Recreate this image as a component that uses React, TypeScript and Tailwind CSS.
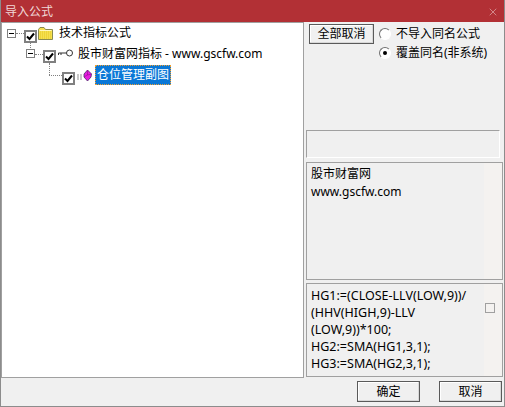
import { X } from "lucide-react";

const font = { fontFamily: '"Noto Sans", "Noto Sans CJK SC", sans-serif' };

function TreeCheck() {
  return (
    <span className="mt-[6px] flex h-[13px] w-[13px] shrink-0 items-center justify-center border-2 border-[#808080] bg-white">
      <svg width="9" height="9" viewBox="0 0 9 9">
        <path d="M1 4.5 L3.5 7 L8 1.5" fill="none" stroke="#000" strokeWidth="2" />
      </svg>
    </span>
  );
}

function Expander() {
  return (
    <span className="flex h-[9px] w-[9px] shrink-0 items-center justify-center border border-[#808080] bg-white">
      <span className="h-px w-[5px] bg-black" />
    </span>
  );
}

function Folder() {
  return (
    <svg width="15" height="13" viewBox="0 0 15 13" className="shrink-0">
      <path d="M0.5 12.5 V2.5 L2 0.5 H6 L7.5 2.5 H14.5 V12.5 Z" fill="#f5e050" stroke="#8a8a50" />
      <path d="M1.5 3.5 H13.5" stroke="#fff8c0" />
      <path d="M2 5 H13 M2 7 H13 M2 9 H13 M2 11 H13" stroke="#e6c820" strokeDasharray="1 1" />
    </svg>
  );
}

function KeyIcon() {
  return (
    <svg width="15" height="9" viewBox="0 0 15 9" className="shrink-0">
      <circle cx="11.5" cy="4" r="3" fill="#fff" stroke="#333" />
      <path d="M8.5 4 H0.5 V6 M3 4 V6" fill="none" stroke="#333" />
    </svg>
  );
}

function GemIcon() {
  return (
    <svg width="15" height="13" viewBox="0 0 15 13" className="shrink-0">
      <path d="M0 6 H6 M0 8 H6 M0 10 H6" stroke="#909090" strokeDasharray="2 1" />
      <path d="M10.5 1 L14.5 5 L14 8 L10.5 12 L7 8 L7 5 Z" fill="#e81ce0" stroke="#4a2a6a" strokeWidth="0.8" />
      <path d="M10.5 1 L10.5 6 L14.5 5 M10.5 6 L7 8" fill="none" stroke="#8a148a" strokeWidth="0.6" />
    </svg>
  );
}

function Radio({ checked }: { checked?: boolean }) {
  return (
    <span className="flex h-[12px] w-[12px] shrink-0 items-center justify-center rounded-full border border-t-[#707070] border-l-[#707070] border-r-[#ffffff] border-b-[#ffffff] bg-white">
      {checked && <span className="h-1 w-1 rounded-full bg-black" />}
    </span>
  );
}

function WinButton({ label, className }: { label: string; className: string }) {
  return (
    <button
      className={`flex items-center justify-center border border-[#5a5a5a] bg-[#f0f0f0] text-[12px] leading-none text-black shadow-[inset_-1px_-1px_0_#d8d8d8,inset_1px_1px_0_#ffffff] ${className}`}
    >
      {label}
    </button>
  );
}

export default function App() {
  return (
    <div className="flex h-[407px] w-[505px] flex-col overflow-hidden border-x border-b border-[#8c8c8c] bg-[#f0f0f0] text-[12px] text-black" style={font}>
      <div className="-mx-px flex h-[22px] shrink-0 items-center justify-between bg-[#b23035] pl-[5px] pr-[6px] pt-[2px] text-[12px] text-[#f0d8d8]">
        <span>导入公式</span>
        <X size={12} strokeWidth={1} className="text-[#f4dcdc]" />
      </div>

      <div className="flex min-h-0 flex-1 gap-[2px] pr-px">
        <div className="relative h-[356px] w-[303px] shrink-0 border border-[#a0a0a0] bg-white">
          {/* dotted connectors between tree nodes */}
          <span className="absolute left-[14px] top-[10px] h-0 w-[8px] border-t border-dotted border-[#808080]" />
          <span className="absolute left-[28px] top-[20px] h-[7px] w-0 border-l border-dotted border-[#808080]" />
          <span className="absolute left-[33px] top-[31px] h-0 w-[8px] border-t border-dotted border-[#808080]" />
          <span className="absolute left-[47px] top-[40px] h-[12px] w-0 border-l border-dotted border-[#808080]" />
          <span className="absolute left-[47px] top-[52px] h-0 w-[13px] border-t border-dotted border-[#808080]" />

          <div className="flex flex-col pl-[5px]">
            <div className="flex h-[20px] items-center">
              <div className="w-[17px]"><Expander /></div>
              <TreeCheck />
              <span className="ml-px"><Folder /></span>
              <span className="ml-[6px] text-[12px] leading-none">技术指标公式</span>
            </div>
            <div className="flex h-[21px] items-center pl-[19px]">
              <div className="w-[17px]"><Expander /></div>
              <TreeCheck />
              <span className="ml-[2px]"><KeyIcon /></span>
              <span className="ml-[5px] text-[12px] leading-none">股市财富网指标 - www.gscfw.com</span>
            </div>
            <div className="flex h-[22px] items-center pl-[55px]">
              <TreeCheck />
              <span className="ml-[2px]"><GemIcon /></span>
              <span className="ml-[3px] flex h-[20px] w-[76px] items-center justify-center whitespace-nowrap border border-dotted border-[#f0a030] bg-[#0a78d7] text-[12px] leading-none text-white">
                仓位管理副图
              </span>
            </div>
          </div>
        </div>

        <div className="flex min-w-0 flex-1 flex-col">
          <div className="flex h-[108px] shrink-0 items-start pl-[3px] pt-[2px]">
            <WinButton label="全部取消" className="h-[20px] w-[65px]" />
            <div className="ml-[5px] flex flex-col gap-px pt-[1px]">
              <label className="flex h-[18px] items-center gap-[5px]"><Radio /><span>不导入同名公式</span></label>
              <label className="flex h-[18px] items-center gap-[5px]"><Radio checked /><span>覆盖同名(非系统)</span></label>
            </div>
          </div>

          <div className="h-[28px] w-[194px] shrink-0 border border-[#a0a0a0] border-b-white border-r-white" />

          <div className="mt-[4px] flex h-[118px] shrink-0 border border-[#a0a0a0]">
            <div className="flex-1 pl-[4px] pt-[2px] leading-[18px]">
              <div>股市财富网</div>
              <div>www.gscfw.com</div>
            </div>
            <div className="w-[18px] shrink-0 bg-[#f4f2f0]" />
          </div>

          <div className="mt-[3px] flex h-[94px] shrink-0 border border-[#a0a0a0]">
            <div className="flex-1 whitespace-nowrap py-[3px] pl-[4px] text-[12.5px] leading-[17px]">
              <div>HG1:=(CLOSE-LLV(LOW,9))/</div>
              <div>(HHV(HIGH,9)-LLV</div>
              <div>(LOW,9))*100;</div>
              <div>HG2:=SMA(HG1,3,1);</div>
              <div>HG3:=SMA(HG2,3,1);</div>
            </div>
            <div className="w-[18px] shrink-0 bg-[#f4f2f0] pl-px pt-[19px]">
              <span className="block h-[10px] w-[10px] border border-[#a0a0a0]" />
            </div>
          </div>
        </div>
      </div>

      <div className="flex h-[28px] shrink-0 items-start justify-end gap-[19px] pr-[2px] pt-[3px]">
        <WinButton label="确定" className="h-[21px] w-[63px]" />
        <WinButton label="取消" className="h-[21px] w-[63px]" />
      </div>
    </div>
  );
}
